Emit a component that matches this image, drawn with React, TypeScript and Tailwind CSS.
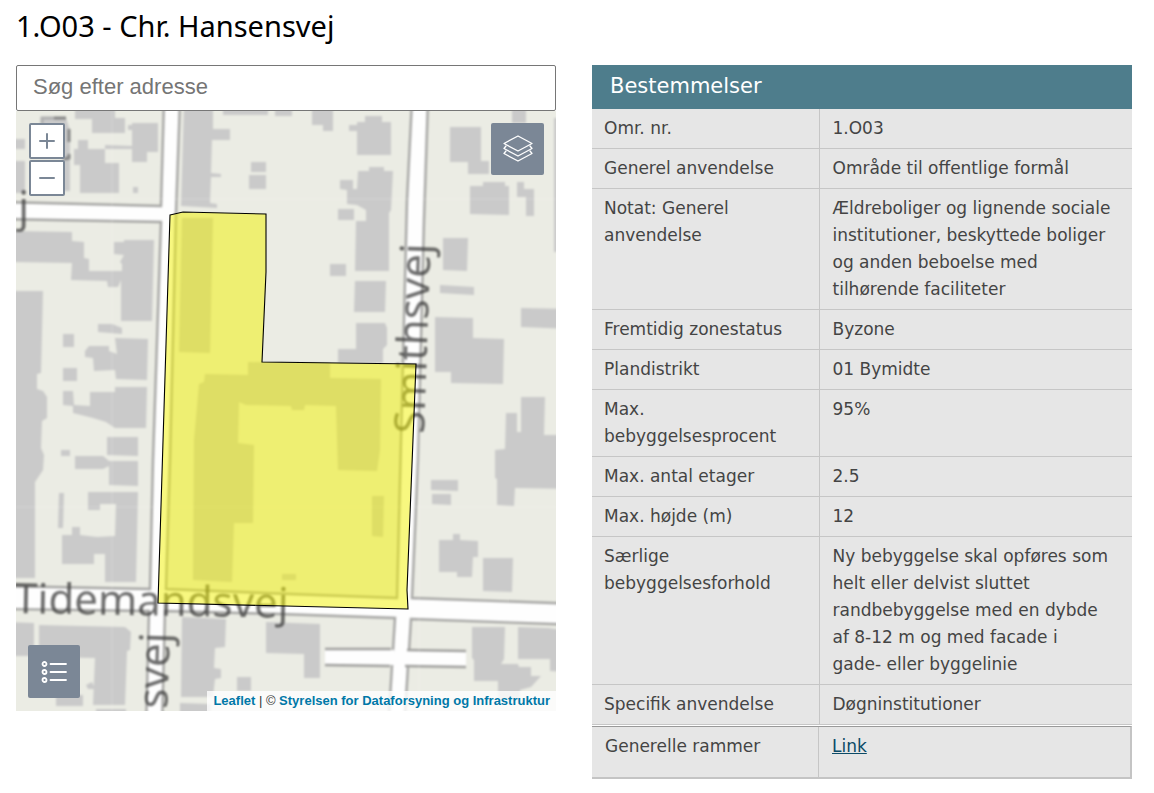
import React from 'react';

const provisions = [
    { label: 'Omr. nr.', value: '1.O03' },
    { label: 'Generel anvendelse', value: 'Område til offentlige formål' },
    {
        label: 'Notat: Generel anvendelse',
        value: 'Ældreboliger og lignende sociale institutioner, beskyttede boliger og anden beboelse med tilhørende faciliteter',
    },
    { label: 'Fremtidig zonestatus', value: 'Byzone' },
    { label: 'Plandistrikt', value: '01 Bymidte' },
    { label: 'Max. bebyggelsesprocent', value: '95%' },
    { label: 'Max. antal etager', value: '2.5' },
    { label: 'Max. højde (m)', value: '12' },
    {
        label: 'Særlige bebyggelsesforhold',
        value: 'Ny bebyggelse skal opføres som helt eller delvist sluttet randbebyggelse med en dybde af 8-12 m og med facade i gade- eller byggelinie',
    },
    { label: 'Specifik anvendelse', value: 'Døgninstitutioner' },
];

// Land between the roads
const blocks = [
    '0,100 164,100 161,206 0,202',
    '0,219 161,222 153,460 150,589 0,586',
    '180,100 412,100 407,200 401,440 397,598 290,594 166,589 170,460 176,213',
    '428,100 424,220 418,460 412,598 580,604 580,100',
    '0,609 149,611 146,730 0,730',
    '165,611 280,614 395,618 388,730 162,730',
    '411,619 580,625 580,730 404,730',
];

const buildings = [
    '75,105 115,105 115,118 125,118 125,133 92,133 92,119 75,119',
    '128,125 132,125 132,123 158,123 158,152 147,152 147,162 132,162 132,130 128,130',
    '105,145 132,146 132,149 105,149',
    '78,140 88,140 88,149 105,149 105,163 119,163 119,193 80,193 80,165 74,165 74,149 78,149',
    '133,187 138,187 138,193 133,193',
    '10,139 25,139 25,149 10,149',
    '10,161 25,161 25,193 10,193',
    '42,118 66,118 70,130 70,191 62,191 62,130 42,130',
    '184,105 213,105 213,129 230,129 230,140 212,140 211,173 221,174 221,177 211,177 210,203 217,204 217,208 181,206',
    '251,162 266,162 266,172 251,172',
    '249,175 266,175 266,189 249,189',
    '223,105 268,105 268,115 223,115',
    '275,105 292,105 292,116 275,116',
    '312,105 333,105 333,131 323,131 323,125 312,125',
    '349,125 357,125 357,122 365,122 365,116 382,116 382,122 391,122 391,155 357,155 357,131 349,131',
    '358,171 369,171 369,167 384,167 384,171 393,171 391,210 389,213 389,271 355,271 356,221 366,221 366,210 357,205 347,204 347,190 340,189 340,180 353,180 353,189 357,189',
    '338,209 354,209 354,220 338,220',
    '330,264 346,264 346,276 330,276',
    '355,281 386,281 385,312 354,312',
    '356,323 385,323 387,328 387,345 383,349 383,363 338,363 338,349 356,349',
    '450,127 481,127 481,161 489,161 489,174 468,174 468,162 450,162',
    '470,186 483,186 483,182 505,182 505,186 509,186 509,215 470,214',
    '517,182 524,182 524,189 534,189 534,216 526,216 526,197 517,197',
    '512,105 526,105 526,123 512,123',
    '554,118 570,118 570,252 554,252',
    '443,238 468,238 467,271 443,270',
    '440,285 474,287 474,295 440,293',
    '521,308 570,309 570,329 521,327',
    '435,317 473,318 473,338 504,339 503,384 451,383 451,372 435,372',
    '521,397 545,397 544,435 570,435 570,489 515,488 514,506 497,505 497,479 495,478 495,450 505,449 506,413 517,413 517,432 521,432',
    '431,480 458,480 458,491 431,490',
    '432,494 451,494 451,505 432,504',
    '439,540 453,540 453,534 460,534 460,540 478,541 478,557 473,557 472,577 457,577 457,572 439,572',
    '483,558 513,558 512,592 483,591',
    '472,627 505,627 504,659 501,664 518,664 519,667 531,667 531,676 541,676 531,687 520,690 520,700 498,700 498,681 474,681 474,660 472,658',
    '518,627 549,628 570,631 570,672 550,671 550,659 518,659',
    '266,622 320,624 320,678 304,678 304,654 266,653',
    '182,617 226,619 225,647 215,648 214,668 221,669 221,678 215,679 213,697 181,697',
    '237,677 251,677 251,691 237,691',
    '180,703 211,704 211,720 180,720',
    '10,622 34,623 34,656 10,656',
    '39,625 125,627 131,632 130,650 127,651 125,705 93,705 95,658 39,657',
    '86,685 92,682 95,689 88,689',
    '56,695 83,695 83,706 56,706',
    '96,709 126,709 126,720 96,720',
    '10,291 43,291 41,373 37,374 37,389 43,391 47,397 47,418 42,421 41,448 44,455 43,470 35,482 35,578 10,578',
    '10,231 72,232 72,241 84,242 84,258 89,259 89,271 122,271 122,264 120,262 124,255 114,254 114,242 124,242 124,240 154,240 152,321 121,321 121,280 118,287 108,287 107,281 71,280 72,263 10,262',
    '98,324 112,324 122,328 122,334 98,332',
    '63,334 74,334 74,347 63,347',
    '115,338 148,339 147,380 116,379 115,370 94,371 93,358 85,357 85,351 89,346 109,346 109,351 117,354',
    '63,368 77,368 77,381 63,381',
    '63,391 73,391 74,405 90,406 90,392 115,392 115,387 147,387 146,428 115,428 106,422 93,418 73,413 73,406 63,405',
    '107,437 138,437 138,456 107,455',
    '61,450 70,450 70,456 61,456',
    '75,456 103,456 109,461 138,461 138,486 109,485 109,466 103,469 75,469',
    '59,493 64,493 63,528 58,528',
    '88,492 138,492 136,582 105,582 105,554 94,554 94,564 62,564 62,535 72,535 72,527 80,527 80,535 97,537 115,536 116,504 100,504 100,510 88,510',
    '182,218 213,218 210,353 179,352',
    '248,362 330,363 330,378 381,379 380,450 377,471 338,470 336,406 305,405 304,410 292,410 291,406 246,405 239,402 238,443 254,445 253,523 234,523 232,582 193,580 194,440 199,384 204,382 205,374 248,375',
    '372,496 384,496 383,537 372,536',
    '282,574 296,574 296,580 282,580',
];

function MapCanvas() {
    return (
        <svg
            className="block w-full h-full"
            viewBox="16 111 540 600"
            preserveAspectRatio="xMidYMid slice"
            role="img"
            aria-label="Kort over Chr. Hansensvej"
        >
            <g className="blur-[1px]">
                <rect x="0" y="90" width="600" height="650" fill="#fefefe" />
                {blocks.map((points) => (
                    <polygon key={points} points={points} fill="#ebece4" stroke="#a6a6a4" strokeWidth="2.4" />
                ))}

                {/* Side road stubs */}
                <path d="M325 650H394V665H325ZM405 651H466V667H405Z" fill="#fefefe" />
                <path
                    d="M325 649H391M325 665L390 666M407 650L466 651M405 666L466 667"
                    fill="none"
                    stroke="#a0a09e"
                    strokeWidth="2.4"
                />

                {buildings.map((points) => (
                    <polygon key={points} points={points} fill="#cacaca" />
                ))}

                {/* Tile seams */}
                <path d="M112 111V711M419 111V711M16 199H556M16 507H556" stroke="#ffffff" strokeOpacity="0.2" />

                <path d="M42 124V118H54" fill="none" stroke="#b0b0b0" strokeWidth="3" />
                <path d="M54 118H66M69 129V142M64 159L69 158V154" fill="none" stroke="#858585" strokeWidth="3" />

                <g className="font-['Noto_Sans',sans-serif] text-[42px]" fill="#3c3c3c" fillOpacity="0.75">
                    <text x="14" y="613" transform="rotate(1 14 613)">Tidemandsvej</text>
                    <text x="424" y="434" transform="rotate(-88 424 434)">Smithsvej</text>
                    <text x="170" y="633" textAnchor="end" transform="rotate(-88 170 633)">svej</text>
                    <text x="29" y="222" textAnchor="end">j</text>
                </g>
            </g>

            {/* Plan area */}
            <polygon
                points="170,215 183,212 266,214 266,272 262,362 416,364 407,590 408,609 158,603"
                fill="#f1f200"
                fillOpacity="0.5"
                stroke="#000000"
                strokeWidth="1.1"
            />
        </svg>
    );
}

function LayersIcon() {
    return (
        <svg width="30" height="28" viewBox="0 0 30 28" fill="none" stroke="#ffffff" strokeWidth="1.3" strokeLinejoin="round" strokeLinecap="round">
            <path d="M15 1L29 8.500L15 16L1 8.500Z" />
            <path d="M3 11L1 13.500L15 21L29 13.500L27 11" />
            <path d="M3 16L1 18.500L15 26L29 18.500L27 16" />
        </svg>
    );
}

function LegendIcon() {
    return (
        <svg width="26" height="24" viewBox="0 0 26 24" fill="none" stroke="#ffffff" strokeWidth="1.8" strokeLinecap="round">
            <circle cx="3.500" cy="4" r="2" />
            <circle cx="3.500" cy="12" r="2" />
            <circle cx="3.500" cy="20" r="2" />
            <path d="M9.500 4H25M9.500 12H25M9.500 20H25" />
        </svg>
    );
}

export default function App() {
    return (
        <div className="min-h-screen bg-white pl-4 pr-[22px] pb-4">
            <h1 className="pt-2 pb-[21px] font-['Noto_Sans',sans-serif] text-[29px] leading-9 text-black">
                1.O03 - Chr. Hansensvej
            </h1>

            <div className="grid grid-cols-2 gap-9 items-start">
                {/* Search and map */}
                <section className="font-['Liberation_Sans',Arial,sans-serif]">
                    <input
                        type="text"
                        aria-label="Søg efter adresse"
                        placeholder="Søg efter adresse"
                        className="block w-full h-[46px] px-4 pb-[2px] border border-[#767676] rounded-xs bg-white text-[22px] text-black placeholder:text-[#757575]"
                    />
                    <div className="relative h-[600px] overflow-hidden bg-[#ebece4]">
                        <MapCanvas />

                        <div className="absolute top-3 left-[13px] flex flex-col gap-px">
                            <button
                                aria-label="Zoom ind"
                                className="w-9 h-9 flex items-center justify-center bg-white border-2 border-[#7b8796] rounded-xs"
                            >
                                <svg width="16" height="16" viewBox="0 0 16 16" stroke="#7b8796" strokeWidth="2" strokeLinecap="round">
                                    <path d="M1 8H15M8 1V15" />
                                </svg>
                            </button>
                            <button
                                aria-label="Zoom ud"
                                className="w-9 h-9 flex items-center justify-center bg-white border-2 border-[#7b8796] rounded-xs"
                            >
                                <svg width="16" height="16" viewBox="0 0 16 16" stroke="#7b8796" strokeWidth="2" strokeLinecap="round">
                                    <path d="M1 8H15" />
                                </svg>
                            </button>
                        </div>

                        <button
                            aria-label="Kortlag"
                            className="absolute top-3 right-3 w-[53px] h-[52px] flex items-center justify-center bg-[#7b8796] rounded-xs"
                        >
                            <LayersIcon />
                        </button>

                        <button
                            aria-label="Signaturforklaring"
                            className="absolute bottom-[13px] left-3 w-[52px] h-[53px] flex items-center justify-center bg-[#7b8796] rounded-xs"
                        >
                            <LegendIcon />
                        </button>

                        <div className="absolute bottom-0 right-0 px-[6px] bg-white/80 text-[13px] leading-5 text-[#333333] whitespace-nowrap">
                            <a href="#leaflet" className="font-bold text-[#0078a8]">Leaflet</a>
                            {' | © '}
                            <a href="#sdfi" className="font-bold text-[#0078a8]">Styrelsen for Dataforsyning og Infrastruktur</a>
                        </div>
                    </div>
                </section>

                {/* Provisions */}
                <section className="font-['DejaVu_Sans',Verdana,sans-serif] text-[17px] leading-[27px] text-[#444444]">
                    <h2 className="h-11 px-[18px] bg-[#4e7d8c] text-[21px] leading-[43px] text-white">Bestemmelser</h2>
                    <table className="w-full table-fixed border-collapse bg-[#e6e6e6]">
                        <tbody>
                            {provisions.map((row) => (
                                <tr key={row.label} className="border-b border-[#c6c6c6]">
                                    <th
                                        scope="row"
                                        className="w-[227px] px-3 py-[6px] border-r border-[#c6c6c6] text-left align-top font-normal"
                                    >
                                        {row.label}
                                    </th>
                                    <td className="pl-[13px] pr-[21px] py-[6px] align-top">{row.value}</td>
                                </tr>
                            ))}
                        </tbody>
                    </table>
                    <table className="w-full mt-px table-fixed border-separate border-spacing-0 border-t border-r-2 border-b-2 border-t-[#999999] border-r-[#c4c4c4] border-b-[#c4c4c4] bg-[#e6e6e6]">
                        <tbody>
                            <tr>
                                <th
                                    scope="row"
                                    className="w-[227px] h-[50px] pl-[13px] py-[6px] border-r border-[#c6c6c6] text-left align-top font-normal"
                                >
                                    Generelle rammer
                                </th>
                                <td className="pl-[13px] py-[6px] align-top">
                                    <a href="#rammer" className="text-[#0b4a66] underline">Link</a>
                                </td>
                            </tr>
                        </tbody>
                    </table>
                </section>
            </div>
        </div>
    );
}
